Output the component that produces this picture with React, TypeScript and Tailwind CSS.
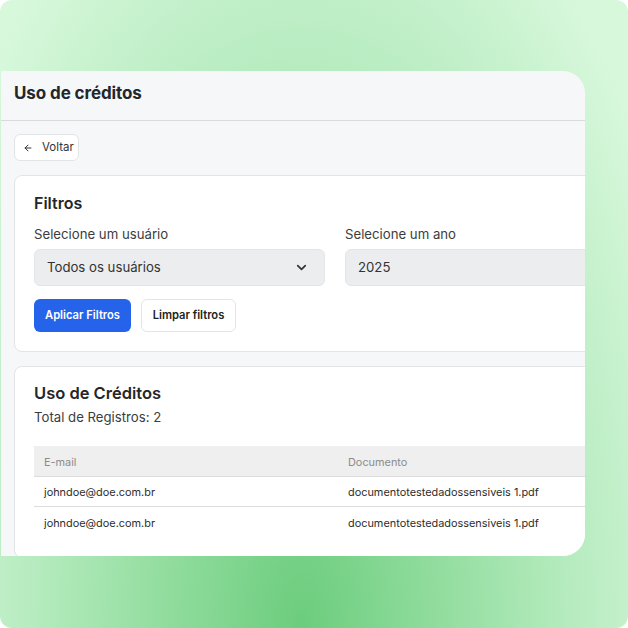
import { ArrowLeft, ChevronDown } from "lucide-react";

const rows = [
  { email: "johndoe@doe.com.br", doc: "documentotestedadossensiveis 1.pdf" },
  { email: "johndoe@doe.com.br", doc: "documentotestedadossensiveis 1.pdf" },
];

export default function App() {
  return (
    <div className="w-[628px] h-[628px] bg-white font-['Inter',sans-serif] text-[#23272a]">
      <div className="h-full rounded-[12px] overflow-hidden pt-[71px] pl-px bg-[radial-gradient(ellipse_66%_135%_at_48%_100%,#6ccd7d_0%,#8edb9b_30%,#b5ebbe_64%,#d8f8dc_100%)]">
        {/* Painel */}
        <div className="w-[584px] h-[485px] bg-[#f6f7f9] rounded-r-[22px] overflow-hidden">
          <div className="h-[50px] border-b border-[#dadbde] px-[13px] pb-[3px] flex items-center">
            <h1 className="text-[17px] font-bold tracking-[-0.1px]">Uso de créditos</h1>
          </div>

          <div className="w-[700px] px-[13px] pt-[13px] flex flex-col items-start gap-[14px]">
            {/* Voltar */}
            <button className="h-[27px] w-[65px] pl-[8px] flex items-center gap-[9px] bg-white border border-[#e3e4e6] rounded-md text-[11.5px] text-[#333]">
              <ArrowLeft size={10} strokeWidth={2.4} />
              Voltar
            </button>

            {/* Filtros */}
            <div className="w-[642px] bg-white border border-[#e3e4e6] rounded-lg px-[19px] pt-[15px] pb-[19px]">
              <h2 className="text-[16px] leading-6 font-semibold">Filtros</h2>
              <div className="grid grid-cols-2 gap-[20px] mt-[9px]">
                <div>
                  <div className="text-[13.2px] leading-5 text-[#3a3d40]">Selecione um usuário</div>
                  <div className="mt-[5px] h-[37px] bg-[#ecedee] border border-[#e4e5e7] rounded-md px-[12px] flex items-center justify-between text-[13.2px] text-[#333]">
                    Todos os usuários
                    <ChevronDown size={15} strokeWidth={2.75} className="mr-[3px]" />
                  </div>
                </div>
                <div>
                  <div className="text-[13.2px] leading-5 text-[#3a3d40]">Selecione um ano</div>
                  <div className="mt-[5px] h-[37px] bg-[#ecedee] border border-[#e4e5e7] rounded-md px-[12px] flex items-center text-[13.2px] text-[#333]">
                    2025
                  </div>
                </div>
              </div>
              <div className="flex gap-[10px] mt-[13px]">
                <button className="h-[33px] w-[97px] bg-[#2563eb] text-white rounded-md text-[11.2px] font-semibold">
                  Aplicar Filtros
                </button>
                <button className="h-[33px] w-[95px] bg-white border border-[#e3e4e6] rounded-md text-[11.2px] font-semibold text-[#222]">
                  Limpar filtros
                </button>
              </div>
            </div>

            {/* Resultado */}
            <div className="w-[642px] bg-white border border-[#e3e4e6] rounded-lg px-[19px] pt-[14px] pb-[20px]">
              <h2 className="text-[16.5px] leading-6 font-semibold">Uso de Créditos</h2>
              <div className="text-[13.2px] leading-5 text-[#3a3d40] mt-[2px]">Total de Registros: 2</div>
              <div className="mt-[19px] text-[10.9px]">
                <div className="grid grid-cols-[304px_1fr] h-[31px] bg-[#efefef] border-b border-[#dcdcdc] items-center text-[#8c8c8c] pt-[2px]">
                  <div className="pl-[10px]">E-mail</div>
                  <div className="pl-[10px]">Documento</div>
                </div>
                {rows.map((r, i) => (
                  <div
                    key={i}
                    className={`grid grid-cols-[304px_1fr] h-[30px] items-center text-[#2d2d2d] pt-[2px] ${
                      i < rows.length - 1 ? "border-b border-[#dcdcdc]" : ""
                    }`}
                  >
                    <div className="pl-[10px]">{r.email}</div>
                    <div className="pl-[10px]">{r.doc}</div>
                  </div>
                ))}
              </div>
            </div>
          </div>
        </div>
      </div>
    </div>
  );
}
